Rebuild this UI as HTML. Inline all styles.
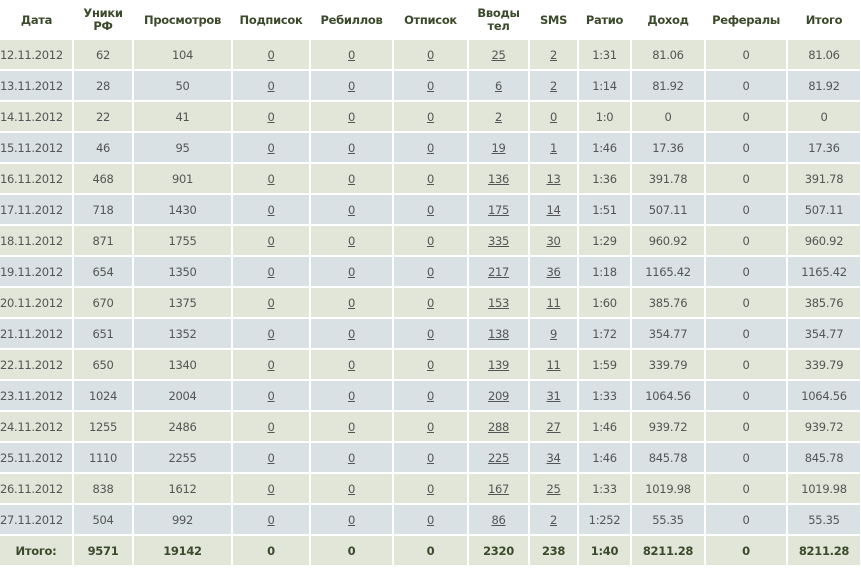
<!DOCTYPE html><html><head><meta charset="utf-8"><style>
body{margin:0;background:#fff;width:861px;height:568px;overflow:hidden}
table{border-collapse:collapse;table-layout:fixed;width:861px;font-family:"DejaVu Sans","Liberation Sans",sans-serif;font-size:11.5px;letter-spacing:-0.3px}
th{height:40px;color:#3b4a2b;font-weight:bold;padding:0;text-align:center;line-height:13px;background:#fff}
td{height:29px;border:2px solid #fff;border-top:0;border-width:0 2px 2px 0;text-align:center;padding:0;color:#555}
tr.g td{background:#e1e6d8}tr.b td{background:#d9e1e4}
td:first-child{text-align:left}
td u{color:#555}
tr.t td{font-weight:bold;color:#3b4a2b;background:#e1e6d8;text-align:center}
</style></head><body><table>
<colgroup><col style="width:73px"><col style="width:60px"><col style="width:99px"><col style="width:78px"><col style="width:83px"><col style="width:75px"><col style="width:61px"><col style="width:49px"><col style="width:53px"><col style="width:74px"><col style="width:82px"><col style="width:74px"></colgroup>
<tr><th>Дата</th><th>Уники<br>РФ</th><th>Просмотров</th><th>Подписок</th><th>Ребиллов</th><th>Отписок</th><th>Вводы<br>тел</th><th>SMS</th><th>Ратио</th><th>Доход</th><th>Рефералы</th><th>Итого</th></tr>
<tr class="g"><td>12.11.2012</td><td>62</td><td>104</td><td><u>0</u></td><td><u>0</u></td><td><u>0</u></td><td><u>25</u></td><td><u>2</u></td><td>1:31</td><td>81.06</td><td>0</td><td>81.06</td></tr>
<tr class="b"><td>13.11.2012</td><td>28</td><td>50</td><td><u>0</u></td><td><u>0</u></td><td><u>0</u></td><td><u>6</u></td><td><u>2</u></td><td>1:14</td><td>81.92</td><td>0</td><td>81.92</td></tr>
<tr class="g"><td>14.11.2012</td><td>22</td><td>41</td><td><u>0</u></td><td><u>0</u></td><td><u>0</u></td><td><u>2</u></td><td><u>0</u></td><td>1:0</td><td>0</td><td>0</td><td>0</td></tr>
<tr class="b"><td>15.11.2012</td><td>46</td><td>95</td><td><u>0</u></td><td><u>0</u></td><td><u>0</u></td><td><u>19</u></td><td><u>1</u></td><td>1:46</td><td>17.36</td><td>0</td><td>17.36</td></tr>
<tr class="g"><td>16.11.2012</td><td>468</td><td>901</td><td><u>0</u></td><td><u>0</u></td><td><u>0</u></td><td><u>136</u></td><td><u>13</u></td><td>1:36</td><td>391.78</td><td>0</td><td>391.78</td></tr>
<tr class="b"><td>17.11.2012</td><td>718</td><td>1430</td><td><u>0</u></td><td><u>0</u></td><td><u>0</u></td><td><u>175</u></td><td><u>14</u></td><td>1:51</td><td>507.11</td><td>0</td><td>507.11</td></tr>
<tr class="g"><td>18.11.2012</td><td>871</td><td>1755</td><td><u>0</u></td><td><u>0</u></td><td><u>0</u></td><td><u>335</u></td><td><u>30</u></td><td>1:29</td><td>960.92</td><td>0</td><td>960.92</td></tr>
<tr class="b"><td>19.11.2012</td><td>654</td><td>1350</td><td><u>0</u></td><td><u>0</u></td><td><u>0</u></td><td><u>217</u></td><td><u>36</u></td><td>1:18</td><td>1165.42</td><td>0</td><td>1165.42</td></tr>
<tr class="g"><td>20.11.2012</td><td>670</td><td>1375</td><td><u>0</u></td><td><u>0</u></td><td><u>0</u></td><td><u>153</u></td><td><u>11</u></td><td>1:60</td><td>385.76</td><td>0</td><td>385.76</td></tr>
<tr class="b"><td>21.11.2012</td><td>651</td><td>1352</td><td><u>0</u></td><td><u>0</u></td><td><u>0</u></td><td><u>138</u></td><td><u>9</u></td><td>1:72</td><td>354.77</td><td>0</td><td>354.77</td></tr>
<tr class="g"><td>22.11.2012</td><td>650</td><td>1340</td><td><u>0</u></td><td><u>0</u></td><td><u>0</u></td><td><u>139</u></td><td><u>11</u></td><td>1:59</td><td>339.79</td><td>0</td><td>339.79</td></tr>
<tr class="b"><td>23.11.2012</td><td>1024</td><td>2004</td><td><u>0</u></td><td><u>0</u></td><td><u>0</u></td><td><u>209</u></td><td><u>31</u></td><td>1:33</td><td>1064.56</td><td>0</td><td>1064.56</td></tr>
<tr class="g"><td>24.11.2012</td><td>1255</td><td>2486</td><td><u>0</u></td><td><u>0</u></td><td><u>0</u></td><td><u>288</u></td><td><u>27</u></td><td>1:46</td><td>939.72</td><td>0</td><td>939.72</td></tr>
<tr class="b"><td>25.11.2012</td><td>1110</td><td>2255</td><td><u>0</u></td><td><u>0</u></td><td><u>0</u></td><td><u>225</u></td><td><u>34</u></td><td>1:46</td><td>845.78</td><td>0</td><td>845.78</td></tr>
<tr class="g"><td>26.11.2012</td><td>838</td><td>1612</td><td><u>0</u></td><td><u>0</u></td><td><u>0</u></td><td><u>167</u></td><td><u>25</u></td><td>1:33</td><td>1019.98</td><td>0</td><td>1019.98</td></tr>
<tr class="b"><td>27.11.2012</td><td>504</td><td>992</td><td><u>0</u></td><td><u>0</u></td><td><u>0</u></td><td><u>86</u></td><td><u>2</u></td><td>1:252</td><td>55.35</td><td>0</td><td>55.35</td></tr>
<tr class="t"><td>Итого:</td><td>9571</td><td>19142</td><td>0</td><td>0</td><td>0</td><td>2320</td><td>238</td><td>1:40</td><td>8211.28</td><td>0</td><td>8211.28</td></tr>
</table></body></html>
